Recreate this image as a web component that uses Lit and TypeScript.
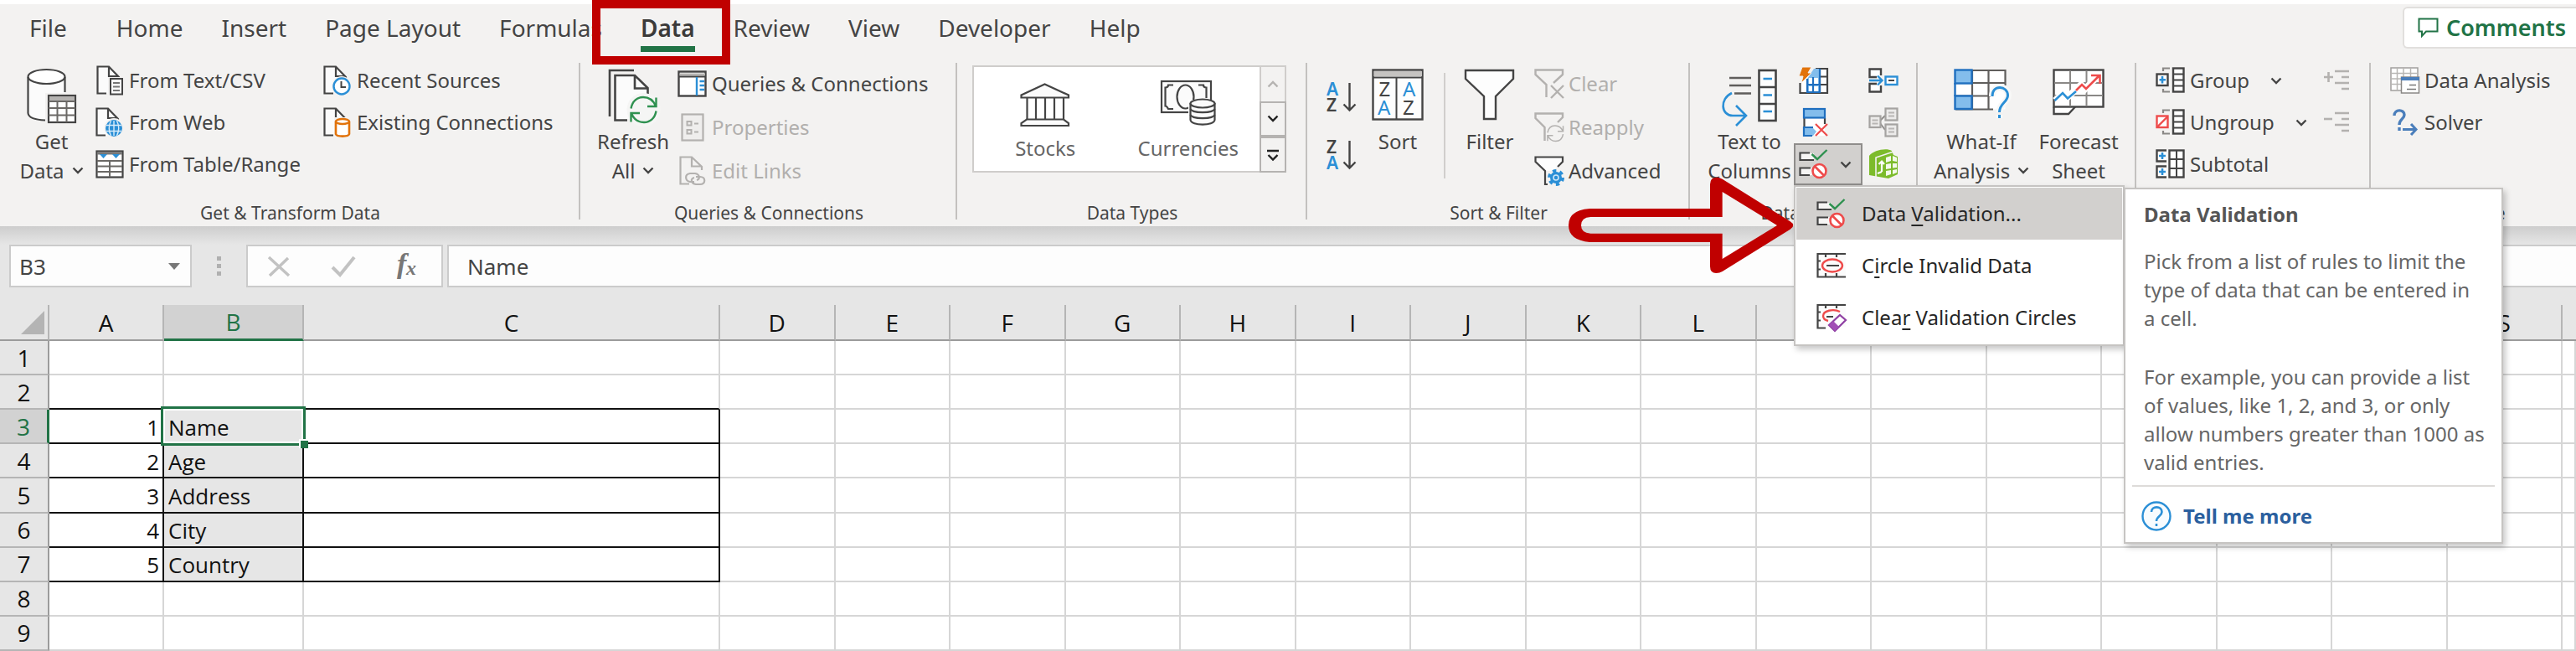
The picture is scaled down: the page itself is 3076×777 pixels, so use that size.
import { LitElement, html, svg, css, nothing, TemplateResult } from "lit";
import { customElement, state } from "lit/decorators.js";
import { classMap } from "lit/directives/class-map.js";

const INK = "#444444";
const BLUE = "#2b8fd6";
const DEEP = "#1f6fbf";
const SKY = "#83bdec";
const RED = "#ee4b4b";
const DIM = "#b3b1af";

const icon = (w: number, h: number, body: unknown) => html`<svg
  width=${w} height=${h} viewBox="0 0 ${w} ${h}" fill="none" stroke-width="2" aria-hidden="true"
>${body}</svg>`;

const chevron = (color = INK) =>
  icon(14, 9, svg`<path d="M1.5 1.5L7 7L12.5 1.5" stroke=${color} stroke-width="2.4"/>`);

const page = (color: string) => svg`
  <path d="M15 1.5H1.5V33.500H27V13L16 1.500Z" fill="#fbfbfb"/>
  <path d="M12 33.500H1.500V1.500H15L27 14V16" stroke=${color} stroke-width="2.200"/>
  <path d="M15 2V13H26" stroke=${color} stroke-width="2.200"/>`;

const refreshArrows = (color: string) => svg`
  <path d="M1.500 15C3 6 9 1.500 16 1.500C23 1.500 28 5 31 12M31.500 2V12.500H21" stroke=${color} stroke-width="2.400"/>
  <path d="M31.500 18C30 27 24 31.500 17 31.500C10 31.500 5 28 2 21M1.500 31V20.500H12" stroke=${color} stroke-width="2.400"/>`;

const icons = {
  getData: icon(60, 66, svg`
    <path d="M2 9V54C4 60 12 62 24 62L45 56V9" fill="#fbfbfb"/>
    <ellipse cx="23.500" cy="9.500" rx="22" ry="8.500" fill="#fff" stroke=${INK} stroke-width="2.200"/>
    <path d="M1.500 10V53C2 58 10 61 22 61.500M45.500 10V28" stroke=${INK} stroke-width="2.200"/>
    <rect x="22" y="29" width="37" height="37" fill="#f3f2f1"/>
    <rect x="26" y="32" width="32" height="32" fill="#fff" stroke=${INK} stroke-width="2.200"/>
    <rect x="27" y="33" width="30" height="5" fill="#b5b3b1"/>
    <path d="M26 39H58M26 47H58M26 55.500H58M36.500 39V64M47.500 39V64" stroke="#6b6966"/>`),
  csv: icon(32, 36, svg`${page(INK)}
    <rect x="14" y="14" width="18" height="22" fill="#f3f2f1"/>
    <rect x="17" y="16" width="14" height="18.500" fill="#fff" stroke=${INK}/>
    <path d="M20 21H28M20 25.500H28M20 30H28" stroke="#777"/>`),
  web: icon(34, 36, svg`${page(INK)}
    <circle cx="22" cy="24.500" r="11.500" fill="#f3f2f1"/><circle cx="22" cy="25" r="10" fill=${BLUE}/>
    <path d="M13 21.500H31M13 28.500H31M22 16V34M18.500 16C15.500 22 15.500 28 18.500 34M25.500 16C28.500 22 28.500 28 25.500 34" stroke="#d8ecfa" stroke-width="1.400"/>`),
  table: icon(34, 34, svg`
    <rect x="1.500" y="1.500" width="31" height="31" fill="#fff" stroke=${INK} stroke-width="2.200"/>
    <path d="M2 4H32" stroke="#777" stroke-width="3"/>
    <path d="M5 5H14L9.500 10ZM20 5H29L24.500 10Z" fill=${BLUE}/>
    <path d="M2 13H32M2 19.500H32M2 26H32M17 13V32" stroke="#6b6966"/>`),
  recent: icon(34, 36, svg`${page(INK)}
    <circle cx="22" cy="25" r="12" fill="#f3f2f1"/><circle cx="22" cy="25" r="9.500" fill="#fff" stroke=${BLUE} stroke-width="2.400"/>
    <path d="M21.500 19V26H27" stroke=${INK}/>`),
  existing: icon(34, 36, svg`${page(INK)}
    <path d="M13 12H33V36H13Z" fill="#f3f2f1"/>
    <path d="M15 17V32C16 35.500 30 35.500 31 32V17" fill="#fff" stroke="#e2730b" stroke-width="2.600"/>
    <ellipse cx="23" cy="17" rx="8" ry="3" fill="#fff" stroke="#e2730b" stroke-width="2.600"/>`),
  refresh: icon(60, 66, svg`
    <path d="M2 57V2H31" stroke=${INK} stroke-width="2.600"/>
    <path d="M8 7H32L47 22V60H8Z" fill="#fbfbfb"/>
    <path d="M23 61.500H8.500V8H32L47.500 23V30M32 8V23.500H47" stroke=${INK} stroke-width="2.600"/>
    <circle cx="42.500" cy="49" r="20" fill="#f5f5f4"/>
    <g transform="translate(26 32.500)">${refreshArrows("#2f9150")}</g>`),
  queries: icon(36, 32, svg`
    <rect x="1.500" y="1.500" width="32" height="29" fill="#fff" stroke=${INK} stroke-width="2.400"/>
    <path d="M2.500 5H33" stroke="#b5b3b1" stroke-width="3"/><path d="M2 7.500H33" stroke=${INK}/>
    <path d="M23 8V30" stroke=${BLUE} stroke-width="2.400"/>
    <path d="M26.500 13H32M26.500 18H32M26.500 23H32" stroke=${BLUE} stroke-width="2.400"/>`),
  properties: icon(28, 34, svg`
    <rect x="1.500" y="1.500" width="25" height="31" fill="#efeeed" stroke=${DIM} stroke-width="2.200"/>
    <rect x="7.500" y="10" width="5" height="4.500" stroke=${DIM}/><rect x="7.500" y="20" width="5" height="4.500" stroke=${DIM}/>
    <path d="M16 12.500H21M16 22.500H21" stroke=${DIM}/>`),
  links: icon(32, 36, svg`
    <path d="M12 33.500H1.500V1.500H15L27 13V17M15 2V12.500H26" stroke=${DIM} stroke-width="2.200"/>
    <path d="M18 31H13C7 30 6 22 13 21H19C25 22 25 28 21 29" stroke=${DIM} stroke-width="2.200"/>
    <path d="M20 25H25C32 25 32 34 25 34H20C14 33 13 27 18 26" stroke=${DIM} stroke-width="2.200"/>`),
  stocks: icon(60, 52, svg`
    <path d="M1.500 17.500V14.500L29.500 1.500L58 14.500V17.500Z" fill="#fbfbfb" stroke=${INK} stroke-width="2.200"/>
    <path d="M8.500 18V43M19 18V43M30 18V43M41 18V43M52 18V43" stroke=${INK} stroke-width="2.200"/>
    <path d="M8 43.500H52L58 48V51H1.500V48Z" fill="#fbfbfb" stroke=${INK} stroke-width="2.200"/>`),
  currencies: icon(68, 56, svg`
    <rect x="2" y="2" width="59" height="37" fill="#fbfbfb" stroke=${INK} stroke-width="2.200"/>
    <path d="M16 6.500H10C10 9 8 9.500 6.500 9.500V31.500C8 31.500 9 33 10 35H16M46 6.500H52C52 9 54 9.500 55.500 9.500V22" stroke=${INK} stroke-width="2.200"/>
    <ellipse cx="30.500" cy="20.500" rx="10" ry="14" stroke=${INK} stroke-width="2.200"/>
    <path d="M34 24H67V56H34Z" fill="#fff"/>
    <path d="M36.500 28V48C37 55.500 65 55.500 65.500 48V28" fill="#fbfbfb" stroke=${INK} stroke-width="2.200"/>
    <path d="M36.500 35C38 40.500 64 40.500 65.500 35M36.500 42C38 47.500 64 47.500 65.500 42" stroke=${INK} stroke-width="2.200"/>
    <ellipse cx="51" cy="28.500" rx="14.500" ry="5" fill="#fbfbfb" stroke=${INK} stroke-width="2.200"/>`),
  azDown: (first: string, second: string) => icon(36, 36, svg`
    <g font-family="Noto Sans, sans-serif" font-size="21" font-weight="600">
      <text x="0" y="16" fill=${first === "A" ? BLUE : INK}>${first}</text>
      <text x="0" y="35" fill=${second === "A" ? BLUE : INK}>${second}</text>
    </g>
    <path d="M27.500 1V33M20.500 26.500L27.500 33.500L34.500 26.500" stroke=${INK} stroke-width="2.400"/>`),
  sort: icon(62, 62, svg`
    <rect x="1.500" y="1.500" width="59" height="59" fill="#fdfdfd" stroke=${INK} stroke-width="2.400"/>
    <path d="M2.500 6H60" stroke="#c5c3c1" stroke-width="6"/><path d="M2 10.500H60M29.500 11V60" stroke=${INK}/>
    <g font-family="Noto Sans, sans-serif" font-size="24">
      <text x="8.500" y="33" fill=${INK}>Z</text><text x="37" y="33" fill=${BLUE}>A</text>
      <text x="7" y="55" fill=${BLUE}>A</text><text x="37" y="55" fill=${INK}>Z</text>
    </g>`),
  filter: icon(62, 62, svg`
    <path d="M2 2H59V12L38 33V60H24V33L2 12Z" fill="#fdfdfd" stroke=${INK} stroke-width="2.400"/>`),
  clear: icon(36, 36, svg`
    <path d="M14.500 34V19L1.500 7V1.500H34V7L23 17" stroke=${DIM} stroke-width="2.400"/>
    <path d="M20 20L35 35M35 20L20 35" stroke=${DIM} stroke-width="2.400"/>`),
  reapply: icon(36, 36, svg`
    <path d="M12.500 34V18L1.500 7V1.500H34V6L28 12" stroke=${DIM} stroke-width="2.400"/>
    <g transform="translate(15 15) scale(.62)">${refreshArrows(DIM)}</g>`),
  advanced: icon(36, 36, svg`
    <path d="M2 2H34V7L22 18H14L2 7Z" fill="#fdfdfd"/>
    <path d="M16 34H13V18L1.500 7V1.500H34V7L28 13" stroke=${INK} stroke-width="2.200"/>
    <circle cx="26" cy="26" r="7" fill=${BLUE}/><circle cx="26" cy="26" r="8" stroke=${BLUE} stroke-width="4" stroke-dasharray="4.200 4.200"/>
    <circle cx="26" cy="26" r="3" stroke="#cfe6f7" stroke-width="1.600"/>`),
  textToColumns: icon(66, 66, svg`
    <path d="M9 11H35M9 20H35M15 29.500H35" stroke="#605e5c" stroke-width="2.600"/>
    <path d="M12 29C-3 36 -1 56 13 56H28M17 44L29 56L17 68" stroke=${BLUE} stroke-width="2.600"/>
    <rect x="44.500" y="2" width="20" height="60" fill="#fdfdfd" stroke=${INK} stroke-width="2.600"/>
    <path d="M44 22H65M44 42H65" stroke=${INK} stroke-width="2.600"/>
    <path d="M49.500 12H60M49.500 31.500H60M49.500 51H60" stroke=${BLUE} stroke-width="2.400"/>`),
  flashFill: icon(36, 34, svg`
    <path d="M34 3H20L9 14L2 20V32H34Z" fill="#fff"/>
    <path d="M20 3H34V32H1.500V20M25 3V32M10 22H34M25 12.500H34" stroke=${INK} stroke-width="2.200"/>
    <path d="M24 3V31H10V15L18 3Z" fill=${SKY}/><path d="M12 14H23V21H12ZM12 24H23V30H12Z" fill="#fff"/>
    <path d="M25 3V31H10V15M10 22H25M17 13V31" stroke=${DEEP} stroke-width="2.200"/>
    <path d="M4 1H15L11 8H15L3 20L5 12H0Z" fill="#e2730b" stroke="#f3f2f1" stroke-width="1"/>`),
  dedupe: icon(34, 36, svg`
    <rect x="6" y="2" width="25" height="32" fill="#fff"/>
    <path d="M6.500 13V24M31 13V20" stroke=${INK} stroke-width="2.200"/>
    <rect x="6" y="2" width="25" height="10.500" fill=${SKY} stroke=${DEEP} stroke-width="2.200"/>
    <path d="M6 24H16L21 29L17 34H6Z" fill=${SKY}/><path d="M17 24H6V34H16" stroke=${DEEP} stroke-width="2.200"/>
    <path d="M20 20L34 34M34 20L20 34" stroke=${RED} stroke-width="2.200"/>`),
  validation: icon(36, 36, svg`
    <path d="M2 5H18V13H2ZM2 22H16V31H2Z" fill="#f6f5f4"/>
    <path d="M13 4.500H1.500V13H18M14 22.500H1.500V31H13" stroke=${INK} stroke-width="2.200"/>
    <path d="M15.500 6L22 12L33.500 1" stroke="#2f9150" stroke-width="2.400"/>
    <circle cx="24.500" cy="26" r="8" fill="#fff" stroke=${RED} stroke-width="2.600"/><path d="M19 20.500L30 31.500" stroke=${RED} stroke-width="2.600"/>`),
  consolidate: icon(36, 30, svg`
    <path d="M15 9V1.500H1.500V11H10M15 21V28.500H1.500V19H10" fill="#fff" stroke=${INK} stroke-width="2.400"/>
    <path d="M1 15H15M11 9.500L16.500 15L11 20.500" stroke=${BLUE} stroke-width="2.400"/>
    <rect x="20.500" y="10.500" width="14" height="9.500" fill="#fff" stroke=${BLUE} stroke-width="2.400"/><path d="M24 15H31" stroke=${INK}/>`),
  relationships: icon(36, 36, svg`
    <path d="M14 16L20 10M14 19L20 27" stroke="#8f8d8b"/>
    <g fill="#ecebea" stroke="#a5a3a1" stroke-width="2.200">
      <rect x="1.500" y="10.500" width="13" height="13.500"/><rect x="20.500" y="1.500" width="14" height="14"/><rect x="20.500" y="20.500" width="14" height="14"/></g>
    <path d="M4.500 15.500H11.500M4.500 19.500H11.500M24 6.500H31M24 10.500H31M24 25.500H31M24 29.500H31" stroke="#b8b6b4"/>`),
  model: icon(36, 38, svg`
    <path d="M1 9C6 2 22 -1 28 3L30 8L35 10V31L24 36L1 32Z" fill="#7cbb2b"/>
    <path d="M9 34V11L30 4" stroke="#f3f2f1" stroke-width="1.600"/>
    <path d="M21 11L27 9V15L21 17ZM29 9L34 11V16L29 15ZM21 19L27 18V24L21 25ZM29 18L34 18V23L29 23.500ZM21 27L27 26V31L21 33ZM29 26L34 25V29L29 31Z" fill="#f3f9ea"/>
    <path d="M16 28V16M12.500 19L16 15.500L19 19M16 28L11 30" stroke="#fff" stroke-width="2.200"/>`),
  whatIf: icon(66, 60, svg`
    <rect x="1.500" y="1.500" width="60" height="47" fill="#fff"/>
    <path d="M22 2H61.500V20M2 17H61M2 32.500H44M22 2V49M41.500 2V49M2 48.500H47" stroke="#605e5c" stroke-width="2.200"/>
    <g fill=${SKY} stroke=${DEEP} stroke-width="2.400"><rect x="1.500" y="1.500" width="20" height="16"/><rect x="1.500" y="32.500" width="20" height="15.500"/></g>
    <path d="M1.500 17V33" stroke=${DEEP} stroke-width="2.400"/>
    <path d="M46 33C46 26 50 22.500 55 22.500C60 22.500 65 26 65 32C65 40 54.500 41 54.500 52M54.500 55V59" stroke="#f8f8f7" stroke-width="8"/>
    <path d="M46 33C46 26 50 22.500 55 22.500C60 22.500 64.500 26 64.500 32C64.500 40 54.500 41 54.500 52M54.500 55V59" stroke=${BLUE} stroke-width="3"/>`),
  forecast: icon(62, 56, svg`
    <path d="M1.500 45.500V54H19L27 45.500" fill="#fff" stroke=${INK} stroke-width="2.400"/>
    <rect x="1.500" y="1.500" width="59" height="44" fill="#fff" stroke=${INK} stroke-width="2.400"/>
    <path d="M2 17H60M2 32H60M21 2V45M40.500 2V45" stroke="#8a8886"/>
    <path d="M3 38L12 30L17 35L34 19L39 24L55 8" stroke="#fff" stroke-width="8"/>
    <path d="M2.500 38L12 29L18 35.500L28 27" stroke=${BLUE} stroke-width="2.600"/>
    <path d="M28 26L35 19L40 24L56 8M46 8H56.500V18" stroke=${RED} stroke-width="2.600"/>`),
  group: icon(36, 32, svg`
    <path d="M9 5V1.500H17M9 26V29.500H17" stroke="#8a8886" stroke-width="2.200"/>
    <rect x="1.500" y="8.500" width="13" height="13.500" fill="#fff" stroke=${INK} stroke-width="2.400"/>
    <path d="M8 11V19.500M4.500 15.300H12" stroke=${BLUE} stroke-width="2.600"/>
    <rect x="21" y="1.500" width="12.500" height="28" fill="#fff" stroke=${INK} stroke-width="2.400"/><path d="M21 8.500H33M21 15.500H33M21 22.500H33" stroke=${INK}/>`),
  ungroup: icon(36, 32, svg`
    <path d="M9 5V1.500H17M9 26V29.500H17" stroke="#8a8886" stroke-width="2.200"/>
    <rect x="1.500" y="8.500" width="13" height="13.500" fill="#fff" stroke=${RED} stroke-width="2.400"/>
    <path d="M2.500 21L14 9.500" stroke=${RED} stroke-width="2.400"/>
    <rect x="21" y="1.500" width="12.500" height="28" fill="#fff" stroke=${INK} stroke-width="2.400"/><path d="M21 8.500H33M21 15.500H33M21 22.500H33" stroke=${INK}/>`),
  subtotal: icon(36, 36, svg`
    <path d="M13 1.500H1.500V14.500H13M13 20.500H1.500V33.500H13" fill="#fff" stroke=${INK} stroke-width="2.400"/>
    <path d="M8 4V12M4 8H12M8 23V31M4 27H12" stroke=${BLUE} stroke-width="2.600"/>
    <rect x="16.500" y="1.500" width="17" height="32" fill="#fff" stroke=${INK} stroke-width="2.400"/><path d="M16 12H33M16 23H33M25 2V33" stroke=${INK}/>`),
  detail: (plus: boolean) => icon(31, 26, svg`
    <path d="M13 2H30M21 9H30M13 16H30M21 23H30" stroke=${DIM} stroke-width="2.600"/>
    <path d=${plus ? "M0 9H11M5.500 3V15" : "M0 9H10"} stroke=${DIM} stroke-width="2.600"/>`),
  analysis: icon(36, 32, svg`
    <rect x="1" y="1" width="32" height="27" fill="#fff" stroke="#a19f9d" stroke-width="1.500"/>
    <path d="M1 7.500H33M1 14H33M1 20.500H33M8.500 1V28M16 1V28M24.500 1V28" stroke="#b8b6b4" stroke-width="1.500"/>
    <rect x="13.500" y="12" width="21" height="19" fill="#fff" stroke="#8a8886" stroke-width="1.500"/><path d="M13 14H35" stroke="#4a7ebb" stroke-width="4"/>
    <path d="M23 21.500H31M20 26.500H31" stroke="#777" stroke-width="1.500"/>`),
  solver: icon(36, 32, svg`
    <path d="M5 8C5 0 17 0 17 7C17 12 11 12 11 19M11 22V26" stroke="#4a7ebb" stroke-width="3.400"/>
    <path d="M15 24.500H30M25 18L31 24.500L25 31" stroke="#4a7ebb" stroke-width="3"/>`),
  circleInvalid: icon(36, 32, svg`
    <rect x="2" y="2" width="33" height="28" fill="#fbfbfb"/>
    <path d="M35 2H1.500V29.500H35M11 2V6M24 2V6M11 29V25M24 29V25M2 10.500H5M2 20.500H5" stroke=${INK} stroke-width="2.200"/>
    <path d="M12 16H27" stroke=${INK}/><ellipse cx="19" cy="16" rx="12" ry="7.500" stroke=${RED} stroke-width="2.400"/>`),
  clearCircles: icon(36, 34, svg`
    <rect x="2" y="2" width="33" height="26" fill="#fbfbfb"/>
    <path d="M35 2H1.500V29.500H11M11 2V6M24 2V6M2 10.500H5M2 20.500H5" stroke=${INK} stroke-width="2.200"/>
    <path d="M12 16H20" stroke=${INK}/><path d="M28 10C20 6 8 9 8 15C8 18 10 20 14 21" stroke=${RED} stroke-width="2.400"/>
    <path d="M15 26L28 14L35 20L22 33Z" fill="#fff" stroke="#8f3fa3" stroke-width="2.200"/><path d="M15 26L20 21L27 28L22 33Z" fill="#a24fb6"/>`),
  help: icon(36, 36, svg`
    <circle cx="18" cy="18" r="16.500" fill="#f7fbfe" stroke=${BLUE} stroke-width="2.400"/>
    <path d="M12 13C12 5.500 24.500 5.500 24.500 13C24.500 18 18 18 18 24M18 27V30" stroke=${BLUE} stroke-width="2.600"/>`),
  comment: icon(26, 24, svg`<path d="M1.500 1.500H23.500V16.500H10L5 22V16.500H1.500Z" stroke="#217346" stroke-width="2"/>`),
};

interface Cell { n: string; label: string }
const ENTRIES: Record<number, Cell> = {
  3: { n: "1", label: "Name" },
  4: { n: "2", label: "Age" },
  5: { n: "3", label: "Address" },
  6: { n: "4", label: "City" },
  7: { n: "5", label: "Country" },
};
const COLUMNS = "ABCDEFGHIJKLMNOPQRST".split("");
const ROWS = [1, 2, 3, 4, 5, 6, 7, 8, 9];

@customElement("sheet-grid")
export class SheetGrid extends LitElement {
  static styles = css`
    :host { display: grid; font: 26px/30px "Open Sans", "Noto Sans", sans-serif; color: #111; }
    table { width: 100%; height: 100%; table-layout: fixed; border-collapse: separate; border-spacing: 0; background: #fff; }
    .c-head { width: 59px; } .c-a { width: 137px; } .c-b { width: 167px; } .c-c { width: 497px; } .c-last { width: 16px; }
    th, td { padding: 0; box-sizing: border-box; overflow: hidden; }
    th { font-weight: 400; font-size: 28px; text-align: center; background: #e6e6e6; }
    thead tr { height: 43px; }
    tbody tr { height: 41px; }
    thead th { border-bottom: 2px solid #9b9b9b; border-right: 2px solid #b5b5b5; }
    thead th:last-child { border-right: 0; }
    tbody th { border-right: 2px solid #9b9b9b; border-bottom: 2px solid #b5b5b5; }
    td { border-right: 2px solid #d6d6d6; border-bottom: 2px solid #d6d6d6; }
    .picked { background: #d2d2d2; color: #217346; }
    thead .picked { border-bottom: 3px solid #217346; }
    tbody .picked { border-right: 3px solid #217346; }
    .under { border-bottom-color: #111; }
    .boxed { border-color: #111; }
    .num { text-align: right; padding: 2px 4px 0 0; }
    .name { padding: 2px 0 0 5px; background: #e6e6e6; border-color: #111; }
    .active { position: relative; overflow: visible; }
    .ring { position: absolute; inset: -4px; border: 3px solid #217346; box-shadow: inset 0 0 0 2px #fff; }
    .grip { position: absolute; right: -6px; bottom: -6px; width: 9px; height: 9px; background: #217346; border: 2px solid #fff; border-width: 2px 0 0 2px; }
    .corner svg { display: block; margin: 0 4px 0 auto; }
  `;

  private cell(row: number, col: string) {
    const entry = ENTRIES[row];
    const inTable = "ABC".includes(col);
    if (!entry || !inTable) return html`<td class=${classMap({ under: row === 2 && inTable })}></td>`;
    if (col === "A") return html`<td class="boxed num">${entry.n}</td>`;
    if (col === "B")
      return html`<td class=${classMap({ name: true, active: row === 3 })}>${entry.label}${row === 3
        ? html`<span class="ring"><span class="grip"></span></span>` : nothing}</td>`;
    return html`<td class="boxed"></td>`;
  }

  render() {
    return html`<table aria-label="Sheet">
      <colgroup>
        <col class="c-head" /><col class="c-a" /><col class="c-b" /><col class="c-c" />
        ${COLUMNS.slice(3, -1).map(() => html`<col />`)}<col class="c-last" />
      </colgroup>
      <thead><tr>
        <th class="corner">${icon(28, 28, svg`<path d="M28 0V28H0Z" fill="#b4b4b4"/>`)}</th>
        ${COLUMNS.map((c) => html`<th scope="col" class=${classMap({ picked: c === "B" })}>${c === "T" ? "" : c}</th>`)}
      </tr></thead>
      <tbody>
        ${ROWS.map((r) => html`<tr>
          <th scope="row" class=${classMap({ picked: r === 3 })}>${r}</th>
          ${COLUMNS.map((c) => this.cell(r, c))}
        </tr>`)}
      </tbody>
    </table>`;
  }
}

@customElement("app-root")
export class AppRoot extends LitElement {
  @state() private tab = "Data";

  static styles = css`
    :host { display: flex; flex-direction: column; min-height: 100vh; overflow: hidden; background: #e6e6e6;
      font: 24px/34px "Noto Sans", "Open Sans", sans-serif; color: #444; }
    *, *::before, *::after { box-sizing: border-box; }
    button, input { font: inherit; color: inherit; background: none; border: 0; padding: 0; margin: 0; }
    svg { display: block; flex: none; overflow: visible; }

    .tabs { display: flex; align-items: flex-start; height: 71px; padding-left: 35px; background: #f3f2f1; border-top: 5px solid #fff; font-size: 28px; }
    .tablist { display: flex; flex: 1; gap: 46px; }
    .tab { position: relative; line-height: 57px; white-space: nowrap; }
    .tab:first-child { margin-right: 13px; }
    .current { font-weight: 600; color: #3b3a39; }
    .current::after { content: ""; position: absolute; left: 0; right: 0; bottom: 0; height: 7px; background: #217346; }
    .frame { position: absolute; left: -58px; right: -42px; top: -5px; height: 77px; border: 10px solid #c00000; z-index: 2; }
    .comments { display: flex; align-items: center; gap: 8px; height: 50px; margin-top: 3px; padding: 0 12px 0 16px; background: #fff;
      border: 2px solid #e1dfdd; border-right: 0; border-radius: 6px 0 0 6px; font-size: 27px; font-weight: 600; color: #217346; }

    .ribbon { display: grid; grid-template-columns: 693fr 450fr 418fr 457fr 272fr 261fr 280fr 245fr; height: 199px; background: #f3f2f1; }
    .group { display: flex; flex-direction: column; min-width: 0;
      background: linear-gradient(#c3c1bf, #c3c1bf) right 4px / 2px calc(100% - 12px) no-repeat; }
    .group:last-child { background: none; }
    .items { display: flex; flex: 1; align-items: flex-start; }
    .caption { font-size: 21px; line-height: 32px; text-align: center; }
    .pad-s { padding-left: 10px; } .pad-m { padding-left: 18px; } .pad-l { padding-left: 23px; }

    .big { display: flex; flex-direction: column; align-items: center; width: 106px; padding-top: 11px; line-height: 35px; white-space: nowrap; }
    .big .art { display: flex; justify-content: center; height: 69px; }
    .big .low { display: flex; align-items: center; gap: 9px; }
    .wide { width: 116px; } .mid { width: 103px; } .slim { width: 86px; }
    .stack { display: flex; flex-direction: column; align-items: flex-start; }
    .loose { padding-top: 3px; }
    .row { display: flex; align-items: center; gap: 5px; height: 50px; white-space: nowrap; }
    .loose .row { height: 52px; }
    .row .art { display: flex; justify-content: center; width: 36px; }
    .row .more { margin-left: 20px; }
    .off { color: #b1afad; }
    .sources { width: 272px; }
    .outline { width: 201px; }

    .gallery { display: flex; width: 375px; height: 128px; margin-top: 7px; background: #fff; border: 2px solid #cfcdcb; }
    .type { display: flex; flex: 1; flex-direction: column; align-items: center; justify-content: flex-end; gap: 9px; padding-bottom: 10px; color: #666; }
    .scroll { display: grid; grid-template-rows: repeat(3, 1fr); width: 32px; margin: -2px; margin-left: 0; }
    .scroll button { display: grid; place-items: center; background: #f3f2f1; border: 2px solid #b5b3b1; }
    .scroll button:first-child { border-color: #cfcdcb; border-bottom: 0; }
    .orders { display: flex; flex-direction: column; gap: 33px; width: 42px; padding-top: 27px; }
    .rule { width: 2px; height: 126px; margin: 16px 10px 0 12px; background: #d0cecc; }

    .tools { width: 82px; }
    .tools .row { padding-left: 6px; }
    .extras .row { padding-left: 7px; }
    .drop { position: relative; }
    .split { display: flex; align-items: center; gap: 13px; width: 82px; height: 50px; padding-left: 4px; background: #d2d0ce; border: 2px solid #8f8d8b; }
    .pointer { position: absolute; left: -302px; top: 19px; z-index: 3; }
    .menu { position: absolute; left: 0; top: 50px; width: 395px; padding: 1px; background: #fff; border: 2px solid #c6c4c2; box-shadow: 3px 4px 7px rgba(0, 0, 0, .22); z-index: 2; color: #262626; }
    .item { display: flex; align-items: center; gap: 18px; width: 100%; height: 62px; padding-left: 24px; white-space: nowrap; }
    .hot { background: #d2d0ce; }
    .item u { text-underline-offset: 4px; text-decoration-thickness: 2px; }
    .tip { position: absolute; left: 394px; top: 53px; width: 453px; padding: 13px 8px 13px; background: #fff; border: 2px solid #c6c4c2;
      box-shadow: 3px 4px 7px rgba(0, 0, 0, .22); z-index: 3; color: #666; }
    .tip h2 { margin: 0 14px 22px; font-size: 24px; line-height: 34px; font-weight: 700; color: #555; }
    .tip p { margin: 0 12px 36px 14px; white-space: nowrap; }
    .tip p:last-of-type { margin-bottom: 10px; }
    .help { display: flex; align-items: center; gap: 14px; padding: 17px 0 0 11px; border-top: 2px solid #dddbd9; color: #2b5f9e; font-weight: 700; text-decoration: none; }

    .formula { display: flex; align-items: center; height: 94px; padding: 0 0 0 11px; background: linear-gradient(#cdcdcd, #e6e6e6 22px, #e6e6e6); }
    .box { display: flex; align-items: center; height: 51px; background: #fdfdfd; border: 2px solid #cbcbcb; font-size: 26px; margin-top: 1px; }
    .ref { width: 218px; padding: 0 12px 0 10px; }
    .ref input { flex: 1; min-width: 0; }
    .dots { display: grid; gap: 4px; margin: 0 30px; }
    .dots i { width: 5px; height: 5px; background: #b0b0b0; }
    .acts { width: 235px; justify-content: space-between; padding: 0 27px 0 23px; margin-right: 5px; }
    .value { flex: 1; border-right: 0; padding-left: 22px; }
    .value input { width: 100%; }
    sheet-grid { flex: 1; }
  `;

  private big(art: unknown, top: string, low: string | null, more = false, size = "") {
    return html`<button class="big ${size}">
      <span class="art">${art}</span><span>${top}</span>
      ${low ? html`<span class="low">${low}${more ? chevron() : nothing}</span>` : nothing}
    </button>`;
  }

  private row(art: unknown, label: string, off = false, more = false) {
    return html`<button class=${classMap({ row: true, off })} ?disabled=${off}>
      <span class="art">${art}</span><span>${label}</span>${more ? html`<span class="more">${chevron()}</span>` : nothing}
    </button>`;
  }

  private group(caption: string, pad: string, items: TemplateResult) {
    return html`<section class="group" aria-label=${caption}>
      <div class="items ${pad}">${items}</div><div class="caption">${caption}</div>
    </section>`;
  }

  private validationDrop() {
    return html`<div class="drop">
      <button class="split" aria-label="Data Validation options" aria-expanded="true">${icons.validation}${chevron()}</button>
      <svg class="pointer" width="340" height="150" viewBox="0 0 1020 450" aria-hidden="true">
        <path fill="#c00000" fill-rule="evenodd" d="M606 177V90Q606 65 630 65Q640 65 650 71L893 223Q904 230 904 237Q904 244 893 251L650 402Q640 408 628 408Q606 408 606 384V297H175Q99 290 99 237Q99 182 175 177ZM650 117L846 237L650 357V266H178Q144 264 144 237Q144 209 178 207H650Z"/>
      </svg>
      <div class="menu" role="menu">
        <button class="item hot" role="menuitem">${icons.validation}<span>Data <u>V</u>alidation...</span></button>
        <button class="item" role="menuitem">${icons.circleInvalid}<span>C<u>i</u>rcle Invalid Data</span></button>
        <button class="item" role="menuitem">${icons.clearCircles}<span>Clea<u>r</u> Validation Circles</span></button>
      </div>
      <aside class="tip" role="tooltip">
        <h2>Data Validation</h2>
        <p>Pick from a list of rules to limit the<br />type of data that can be entered in<br />a cell.</p>
        <p>For example, you can provide a list<br />of values, like 1, 2, and 3, or only<br />allow numbers greater than 1000 as<br />valid entries.</p>
        <a class="help" href="#help">${icons.help}<span>Tell me more</span></a>
      </aside>
    </div>`;
  }

  render() {
    const tabs = ["File", "Home", "Insert", "Page Layout", "Formulas", "Data", "Review", "View", "Developer", "Help"];
    return html`
      <header class="tabs">
        <div class="tablist" role="tablist">
          ${tabs.map((t) => html`<button role="tab" class=${classMap({ tab: true, current: t === this.tab })}
            aria-selected=${t === this.tab} @click=${() => (this.tab = t)}>${t}${t === "Data" ? html`<span class="frame"></span>` : nothing}</button>`)}
        </div>
        <button class="comments">${icons.comment}Comments</button>
      </header>
      <div class="ribbon">
        ${this.group("Get & Transform Data", "pad-s", html`
          ${this.big(icons.getData, "Get", "Data", true, "mid")}
          <div class="stack sources">
            ${this.row(icons.csv, "From Text/CSV")}${this.row(icons.web, "From Web")}${this.row(icons.table, "From Table/Range")}
          </div>
          <div class="stack">${this.row(icons.recent, "Recent Sources")}${this.row(icons.existing, "Existing Connections")}</div>`)}
        ${this.group("Queries & Connections", "pad-s", html`
          ${this.big(icons.refresh, "Refresh", "All", true)}
          <div class="stack loose">
            ${this.row(icons.queries, "Queries & Connections")}${this.row(icons.properties, "Properties", true)}${this.row(icons.links, "Edit Links", true)}
          </div>`)}
        ${this.group("Data Types", "pad-m", html`
          <div class="gallery">
            <button class="type">${icons.stocks}<span>Stocks</span></button>
            <button class="type">${icons.currencies}<span>Currencies</span></button>
            <div class="scroll">
              <button aria-label="Previous" disabled>${icon(14, 9, svg`<path d="M1.500 7.500L7 2L12.500 7.500" stroke="#b5b3b1" stroke-width="2.400"/>`)}</button>
              <button aria-label="Next">${chevron("#222")}</button>
              <button aria-label="More">${icon(16, 16, svg`<path d="M1 3H15M2.500 8L8 13.500L13.500 8" stroke="#222" stroke-width="2.400"/>`)}</button>
            </div>
          </div>`)}
        ${this.group("Sort & Filter", "pad-l", html`
          <div class="orders">
            <button aria-label="Sort A to Z">${icons.azDown("A", "Z")}</button>
            <button aria-label="Sort Z to A">${icons.azDown("Z", "A")}</button>
          </div>
          ${this.big(icons.sort, "Sort", null, false, "slim")}
          <span class="rule"></span>
          ${this.big(icons.filter, "Filter", null, false, "slim")}
          <div class="stack loose pad-s">
            ${this.row(icons.clear, "Clear", true)}${this.row(icons.reapply, "Reapply", true)}${this.row(icons.advanced, "Advanced")}
          </div>`)}
        ${this.group("Data Tools", "pad-m", html`
          ${this.big(icons.textToColumns, "Text to", "Columns")}
          <div class="stack tools">
            <button class="row" aria-label="Flash Fill">${icons.flashFill}</button>
            <button class="row" aria-label="Remove Duplicates">${icons.dedupe}</button>
            ${this.validationDrop()}
          </div>
          <div class="stack extras">
            <button class="row" aria-label="Consolidate">${icons.consolidate}</button>
            <button class="row" aria-label="Relationships">${icons.relationships}</button>
            <button class="row" aria-label="Manage Data Model">${icons.model}</button>
          </div>`)}
        ${this.group("Forecast", "pad-m", html`
          ${this.big(icons.whatIf, "What-If", "Analysis", true, "wide")}${this.big(icons.forecast, "Forecast", "Sheet", false, "wide")}`)}
        ${this.group("Outline", "pad-l", html`
          <div class="stack outline">
            ${this.row(icons.group, "Group", false, true)}${this.row(icons.ungroup, "Ungroup", false, true)}${this.row(icons.subtotal, "Subtotal")}
          </div>
          <div class="stack">
            <button class="row" aria-label="Show Detail">${icons.detail(true)}</button>
            <button class="row" aria-label="Hide Detail">${icons.detail(false)}</button>
          </div>`)}
        ${this.group("Analyze", "pad-l", html`
          <div class="stack">${this.row(icons.analysis, "Data Analysis")}${this.row(icons.solver, "Solver")}</div>`)}
      </div>
      <div class="formula">
        <div class="box ref">
          <input aria-label="Name box" .value=${"B3"} />
          <button aria-label="Named ranges">${icon(14, 8, svg`<path d="M0 0H14L7 8Z" fill="#777"/>`)}</button>
        </div>
        <span class="dots"><i></i><i></i><i></i></span>
        <div class="box acts">
          <button aria-label="Cancel">${icon(28, 26, svg`<path d="M2 2L26 24M25 3L3 24" stroke="#c2c2c2" stroke-width="3.400"/>`)}</button>
          <button aria-label="Enter">${icon(30, 26, svg`<path d="M2 14L11 23L28 2" stroke="#c2c2c2" stroke-width="4"/>`)}</button>
          <button aria-label="Insert function">${icon(28, 34, svg`<g font-family="Liberation Serif, serif" font-style="italic" font-weight="700" fill="#777"><text x="2" y="25" font-size="34">f</text><text x="13" y="27" font-size="24">x</text></g>`)}</button>
        </div>
        <div class="box value"><input aria-label="Formula bar" .value=${"Name"} /></div>
      </div>
      <sheet-grid></sheet-grid>
    `;
  }
}
